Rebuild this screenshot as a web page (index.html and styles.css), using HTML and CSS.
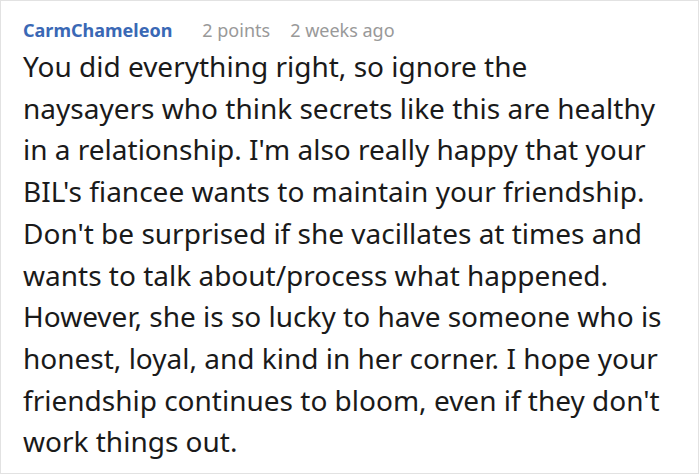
FILE: index.html
```html
<!DOCTYPE html>
<html>
<head>
<meta charset="utf-8">
<link rel="stylesheet" href="styles.css">
</head>
<body>
<div class="comment">
  <div class="meta">
    <span class="author">CarmChameleon</span>
    <span class="info">2 points</span>
    <span class="info">2 weeks ago</span>
  </div>
  <p class="text">You did everything right, so ignore the naysayers who think secrets like this are healthy in a relationship. I'm also really happy that your BIL's fiancee wants to maintain your friendship. Don't be surprised if she vacillates at times and wants to talk about/process what happened. However, she is so lucky to have someone who is honest, loyal, and kind in her corner. I hope your friendship continues to bloom, even if they don't work things out.</p>
</div>
</body>
</html>
```
FILE: styles.css
```css
html, body {
  margin: 0;
  padding: 0;
  background: #fff;
}
.comment {
  box-sizing: border-box;
  width: 699px;
  height: 474px;
  border: 1px solid #e2e2e2;
  padding: 14px 34px 0 22px;
  font-family: "Noto Sans", sans-serif;
}
.meta {
  display: flex;
  gap: 30px;
  font-size: 18px;
  line-height: 30px;
}
.author {
  font-weight: bold;
  color: #3a68b5;
}
.info {
  color: #999;
}
.info + .info {
  margin-left: -10px;
}
.text {
  margin: 1px 0 0;
  font-size: 28px;
  line-height: 41.7px;
  color: #1a1a1a;
}
```
